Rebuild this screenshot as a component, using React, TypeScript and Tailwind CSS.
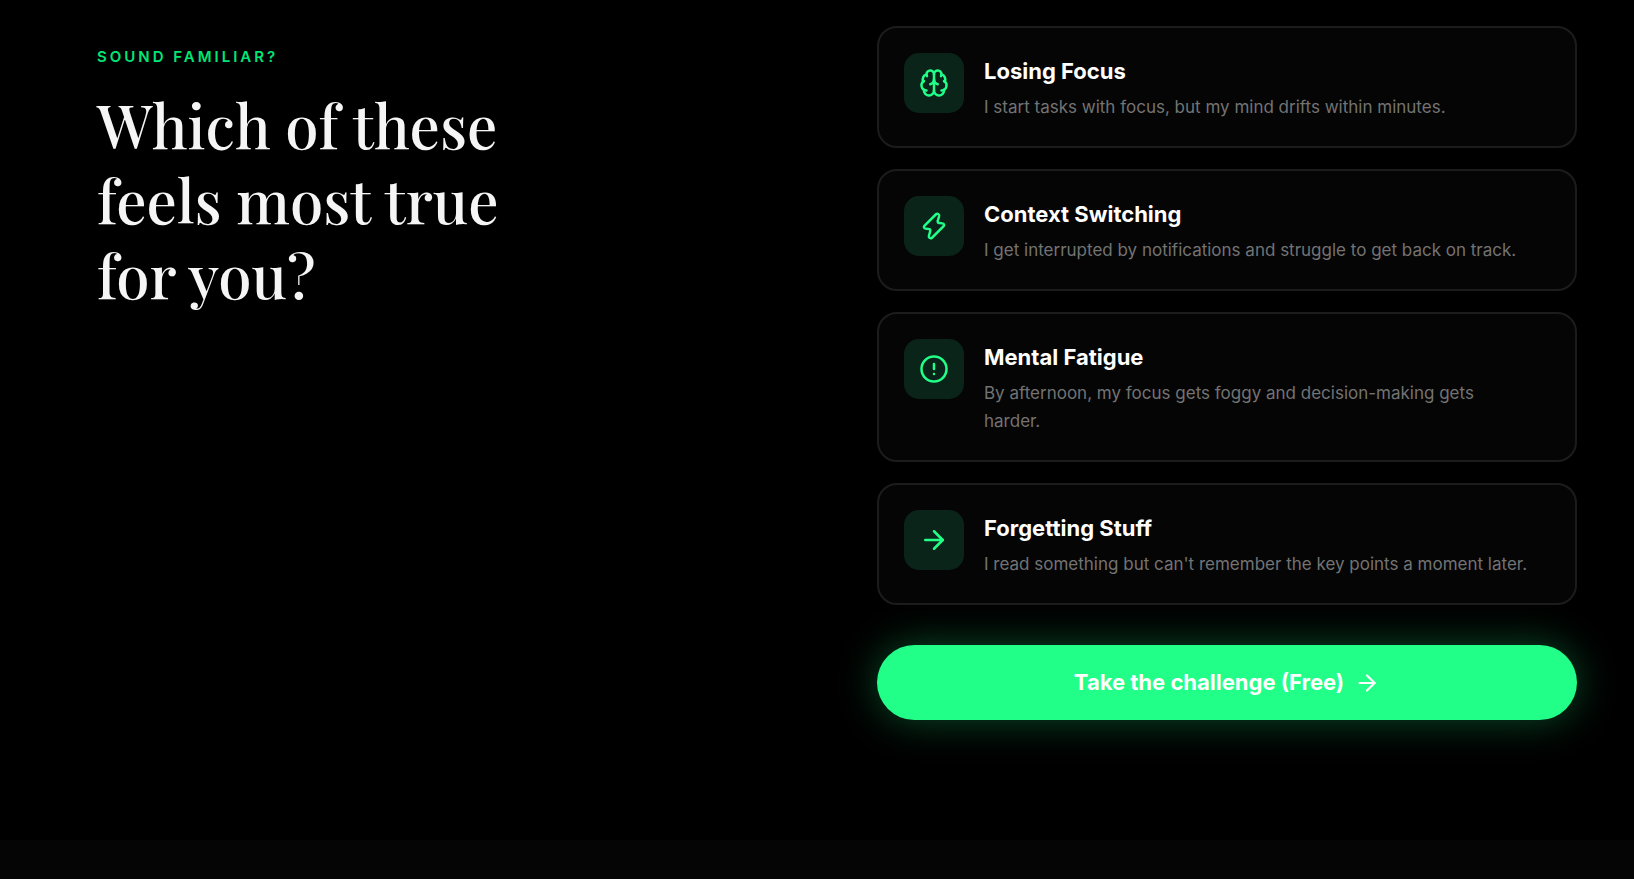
import type { ComponentType, SVGProps } from "react";
import { ArrowRight, Brain, CircleAlert } from "lucide-react";

type Struggle = {
  title: string;
  description: string;
  icon: ComponentType<SVGProps<SVGSVGElement>>;
};

function Bolt(props: SVGProps<SVGSVGElement>) {
  return (
    <svg
      viewBox="0 0 24 24"
      fill="none"
      stroke="currentColor"
      strokeLinecap="round"
      strokeLinejoin="round"
      {...props}
    >
      <path d="M4.3 11.9 13.6 2.6a1.5 1.5 0 0 1 2.5 1.4L15 8a1.2 1.2 0 0 0 1.2 1.6l2.6.3a1.3 1.3 0 0 1 .9 2.2L10.4 21.4a1.5 1.5 0 0 1-2.5-1.4L9 16a1.2 1.2 0 0 0-1.2-1.6l-2.6-.3a1.3 1.3 0 0 1-.9-2.2z" />
    </svg>
  );
}

const struggles: Struggle[] = [
  {
    title: "Losing Focus",
    description: "I start tasks with focus, but my mind drifts within minutes.",
    icon: Brain,
  },
  {
    title: "Context Switching",
    description: "I get interrupted by notifications and struggle to get back on track.",
    icon: Bolt,
  },
  {
    title: "Mental Fatigue",
    description: "By afternoon, my focus gets foggy and decision-making gets harder.",
    icon: CircleAlert,
  },
  {
    title: "Forgetting Stuff",
    description: "I read something but can't remember the key points a moment later.",
    icon: ArrowRight,
  },
];

function StruggleCard({ title, description, icon: Icon }: Struggle) {
  return (
    <button
      type="button"
      className="flex w-full items-start gap-5 rounded-[20px] border-2 border-[#1c1c1c] bg-[#050505] p-[25px] text-left"
    >
      <span className="flex size-[60px] shrink-0 items-center justify-center rounded-[15px] bg-[#0a2419]">
        <Icon className="size-[30px] text-[#22ff88]" strokeWidth={2} />
      </span>
      <span className="flex max-w-[546px] flex-col gap-1">
        <span className="text-[22px] leading-9 font-bold text-white">{title}</span>
        <span className="text-[17px] leading-7 text-[#737373]">{description}</span>
      </span>
    </button>
  );
}

export default function App() {
  return (
    <main className="min-h-screen bg-[#050505] font-['Inter',sans-serif]">
      <section className="bg-black pt-[26px] pb-[120px]">
        <div className="mx-auto grid max-w-[1600px] grid-cols-1 gap-10 px-10 lg:grid-cols-2 lg:gap-[120px]">
          {/* Intro */}
          <div className="px-10 pt-[21px]">
            <p className="text-[15px] leading-5 font-semibold tracking-[3px] text-[#00e676] uppercase">
              Sound familiar?
            </p>
            <h2 className="mt-5 max-w-[440px] font-['Playfair_Display','Liberation_Serif',serif] text-[60px] leading-[75px] font-medium text-[#f5f5f5]">
              Which of these feels most true for you?
            </h2>
          </div>

          {/* Options */}
          <div>
            <div className="flex flex-col gap-[21px]">
              {struggles.map((struggle) => (
                <StruggleCard key={struggle.title} {...struggle} />
              ))}
            </div>
            <button
              type="button"
              className="mt-10 flex h-[75px] w-full items-center justify-center gap-2.5 rounded-full bg-[#22ff88] text-[22px] font-bold text-white shadow-[0_0_40px_rgba(34,255,136,0.3)]"
            >
              Take the challenge (Free)
              <ArrowRight className="size-[26px]" strokeWidth={2} />
            </button>
          </div>
        </div>
      </section>
    </main>
  );
}
